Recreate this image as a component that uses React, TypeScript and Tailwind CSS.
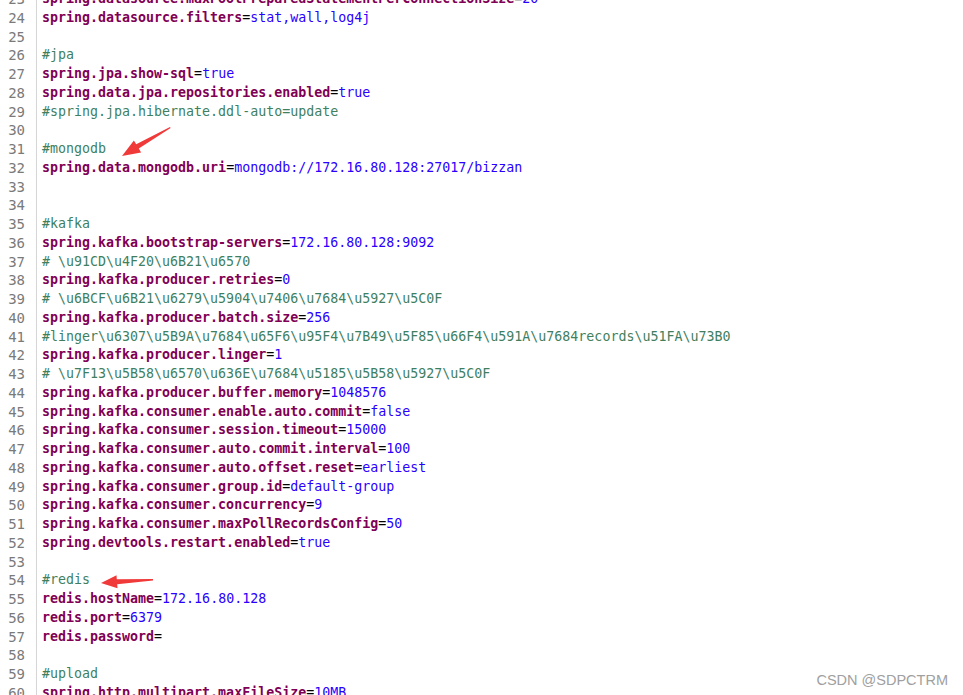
import React from "react";

type Line = { n: number; text: string };

const lines: Line[] = [
  { n: 23, text: "spring.datasource.maxPoolPreparedStatementPerConnectionSize=20" },
  { n: 24, text: "spring.datasource.filters=stat,wall,log4j" },
  { n: 25, text: "" },
  { n: 26, text: "#jpa" },
  { n: 27, text: "spring.jpa.show-sql=true" },
  { n: 28, text: "spring.data.jpa.repositories.enabled=true" },
  { n: 29, text: "#spring.jpa.hibernate.ddl-auto=update" },
  { n: 30, text: "" },
  { n: 31, text: "#mongodb" },
  { n: 32, text: "spring.data.mongodb.uri=mongodb://172.16.80.128:27017/bizzan" },
  { n: 33, text: "" },
  { n: 34, text: "" },
  { n: 35, text: "#kafka" },
  { n: 36, text: "spring.kafka.bootstrap-servers=172.16.80.128:9092" },
  { n: 37, text: "# \\u91CD\\u4F20\\u6B21\\u6570" },
  { n: 38, text: "spring.kafka.producer.retries=0" },
  { n: 39, text: "# \\u6BCF\\u6B21\\u6279\\u5904\\u7406\\u7684\\u5927\\u5C0F" },
  { n: 40, text: "spring.kafka.producer.batch.size=256" },
  { n: 41, text: "#linger\\u6307\\u5B9A\\u7684\\u65F6\\u95F4\\u7B49\\u5F85\\u66F4\\u591A\\u7684records\\u51FA\\u73B0" },
  { n: 42, text: "spring.kafka.producer.linger=1" },
  { n: 43, text: "# \\u7F13\\u5B58\\u6570\\u636E\\u7684\\u5185\\u5B58\\u5927\\u5C0F" },
  { n: 44, text: "spring.kafka.producer.buffer.memory=1048576" },
  { n: 45, text: "spring.kafka.consumer.enable.auto.commit=false" },
  { n: 46, text: "spring.kafka.consumer.session.timeout=15000" },
  { n: 47, text: "spring.kafka.consumer.auto.commit.interval=100" },
  { n: 48, text: "spring.kafka.consumer.auto.offset.reset=earliest" },
  { n: 49, text: "spring.kafka.consumer.group.id=default-group" },
  { n: 50, text: "spring.kafka.consumer.concurrency=9" },
  { n: 51, text: "spring.kafka.consumer.maxPollRecordsConfig=50" },
  { n: 52, text: "spring.devtools.restart.enabled=true" },
  { n: 53, text: "" },
  { n: 54, text: "#redis" },
  { n: 55, text: "redis.hostName=172.16.80.128" },
  { n: 56, text: "redis.port=6379" },
  { n: 57, text: "redis.password=" },
  { n: 58, text: "" },
  { n: 59, text: "#upload" },
  { n: 60, text: "spring.http.multipart.maxFileSize=10MB" },
];

function CodeLine({ text }: { text: string }) {
  if (!text) return <span>&nbsp;</span>;
  if (text.startsWith("#")) return <span className="text-[#3f7f5f]">{text}</span>;
  const i = text.indexOf("=");
  return (
    <>
      <span className="font-bold text-[#7f0055]">{text.slice(0, i)}</span>
      <span className="text-black">=</span>
      <span className="text-[#2a00ff]">{text.slice(i + 1)}</span>
    </>
  );
}

export default function App() {
  return (
    <div className="relative h-[695px] w-[963px] overflow-hidden bg-white font-['DejaVu_Sans_Mono',monospace] text-[13.3px] leading-[18.75px]">
      <div className="-mt-[10px] flex">
        <div className="w-[37px] shrink-0 border-r border-[#d6d6d6] pr-[11px] text-right text-[14px] text-[#7a7a7a]">
          {lines.map((l) => (
            <div key={l.n} className="h-[18.75px] whitespace-pre">{l.n}</div>
          ))}
        </div>
        <div className="pl-[5px]">
          {lines.map((l) => (
            <div key={l.n} className="h-[18.75px] whitespace-pre">
              <CodeLine text={l.text} />
            </div>
          ))}
        </div>
      </div>

      {/* red annotation arrows */}
      <svg className="pointer-events-none absolute left-0 top-0" width="963" height="695">
        <polygon
          fill="#f03a3a"
          points="170,127 136.2,144.3 133.9,140.4 122,156 141.1,152.4 138.8,148.5 170.6,128"
        />
        <polygon
          fill="#f03a3a"
          points="153,579 116.8,579.3 116.5,575.3 101,583 117.5,588.3 117.2,584.3 153,580.5"
        />
      </svg>

      <div className="absolute bottom-[5px] right-[15px] font-['Liberation_Sans',sans-serif] text-[14.5px] text-[#a0a0a0]">
        CSDN @SDPCTRM
      </div>
    </div>
  );
}
